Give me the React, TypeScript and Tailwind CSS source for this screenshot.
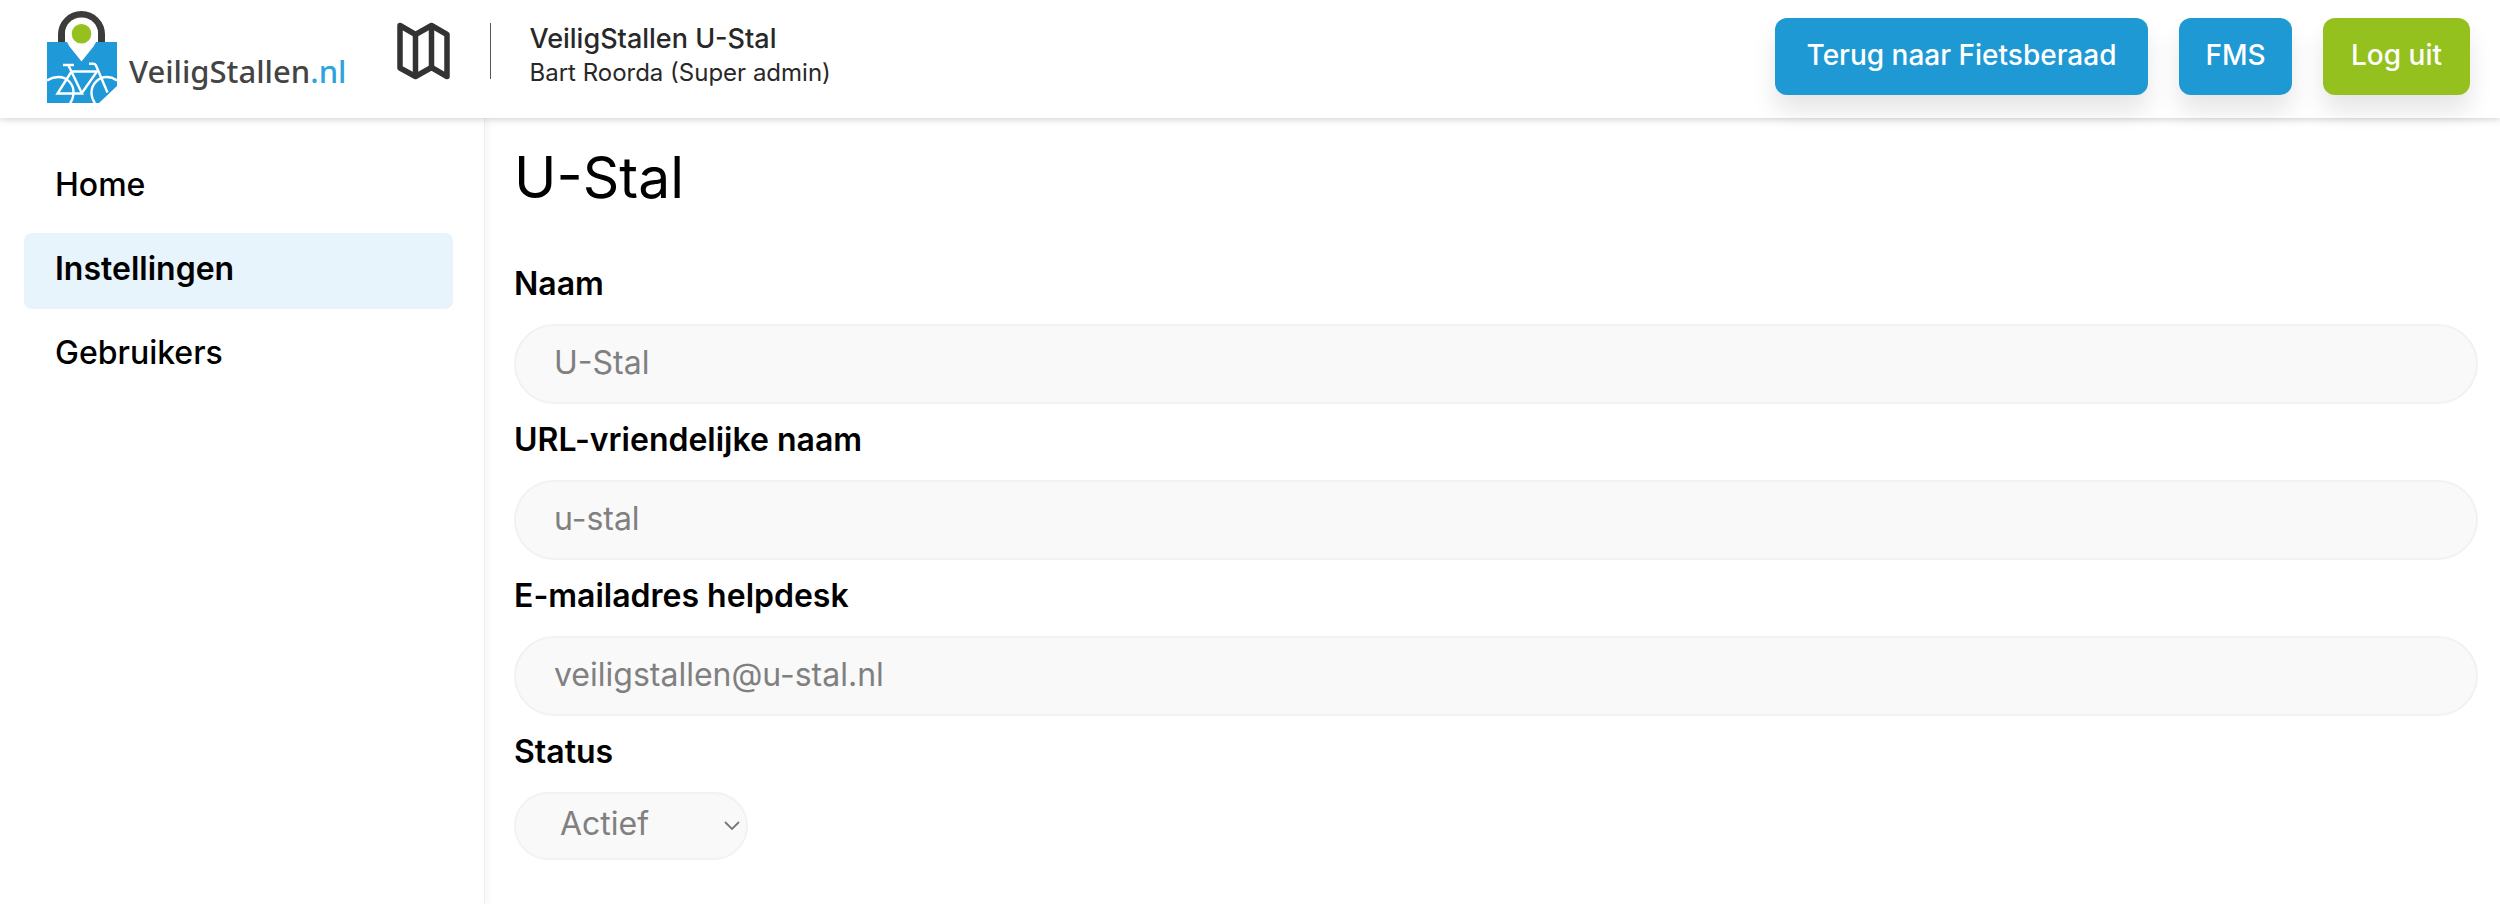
import { useState } from "react";
import clsx from "clsx";

interface FieldProps {
    id: string;
    label: string;
    value: string;
}

const menuItems = ["Home", "Instellingen", "Gebruikers"];

const fields: FieldProps[] = [
    { id: "naam", label: "Naam", value: "U-Stal" },
    { id: "url-naam", label: "URL-vriendelijke naam", value: "u-stal" },
    { id: "helpdesk", label: "E-mailadres helpdesk", value: "veiligstallen@u-stal.nl" },
];

const Logo = () => (
    <a href="#" className="flex items-start text-[#444444]" aria-label="VeiligStallen.nl">
        <svg width="70" height="92" viewBox="0 0 70 92" fill="none">
            {/* lock */}
            <path d="M14.5 34V23.500a20 20 0 0 1 40 0V34" stroke="#3c3c3b" strokeWidth="7" />
            <path d="M0 31H70V75L52 92H0Z" fill="#1f99d8" />
            {/* pin */}
            <path
                d="M34.500 6.500c-9.500 0-16.500 7-16.500 16.200 0 4.800 2 8.800 4.500 12.800L34.500 50.500 46.500 35.500c2.500-4 4.500-8 4.500-12.800 0-9.200-7-16.200-16.500-16.200Z"
                fill="#fff"
            />
            <circle cx="34.500" cy="22.800" r="9.800" fill="#95c11f" />
            {/* bike */}
            <g stroke="#fff" strokeWidth="2.400">
                <path d="M0 69.500c4-2.500 7.500-3.500 11.500-3.500 8.500 0 15 7 15 15 0 4-1 8-3.500 11" />
                <path d="M70 69.500c-3-2.300-6.500-3.500-10-3.500-8.500 0-15.500 7-15.500 15.500 0 4 1.200 7.500 3.500 10.500" />
                <path d="M16 54H27M21.500 54.500 35 82.500H10.500L24.500 60.500M24.500 60.500H50L34.500 82.500" />
                <path d="M42 52.800H46.500C48 52.800 48.600 53.300 49 54.500L60.500 81.500" />
            </g>
        </svg>
        <span className="mt-10 ml-3 font-['Noto_Sans'] text-[31px] leading-10 font-medium">
            VeiligStallen<span className="text-[#2ea3dc]">.nl</span>
        </span>
    </a>
);

const MapIcon = () => (
    <svg width="56" height="58" viewBox="0 0 56 58" fill="none" stroke="#333" strokeWidth="5.500" strokeLinejoin="round">
        <path d="M4 3.500 19.500 12.500 35.500 3.500 51 12.500V54.500L35.500 45.500 19.500 54.500 4 46Z" />
        <path d="M19.500 12.500V54.500M35.500 3.500V45.500" />
    </svg>
);

const Header = () => (
    <header className="relative flex h-[118px] items-start justify-between bg-white pr-[30px] pl-[47px] shadow-[0_0_8px_rgba(0,0,0,0.25)]">
        <div className="flex items-start pt-[11px]">
            <Logo />
            <a href="#" className="mt-[11px] ml-[50px]" aria-label="Kaart">
                <MapIcon />
            </a>
            <div className="mt-3 ml-[38px] h-14 w-px bg-[#555555]" />
            <div className="mt-[10px] ml-[38px] text-[#282828]">
                <div className="text-[27px] leading-9 font-medium">VeiligStallen U-Stal</div>
                <div className="text-[24px] leading-8">Bart Roorda (Super admin)</div>
            </div>
        </div>
        <div className="flex gap-[31px] pt-[18px] text-[28px] font-medium text-white">
            <button className="h-[77px] w-[373px] rounded-xl bg-[#1f99d3] pb-1 shadow-[0_16px_24px_rgba(0,0,0,0.1)]">
                Terug naar Fietsberaad
            </button>
            <button className="h-[77px] w-[113px] rounded-xl bg-[#1f99d3] pb-1 shadow-[0_16px_24px_rgba(0,0,0,0.1)]">
                FMS
            </button>
            <button className="h-[77px] w-[147px] rounded-xl bg-[#95c11f] pb-1 shadow-[0_16px_24px_rgba(0,0,0,0.1)]">
                Log uit
            </button>
        </div>
    </header>
);

const Field = ({ id, label, value }: FieldProps) => (
    <>
        <label htmlFor={id} className="flex h-[76px] items-center pb-1 text-[32px] font-semibold">
            {label}
        </label>
        <input
            id={id}
            type="text"
            readOnly
            defaultValue={value}
            className="h-20 w-full rounded-full border-2 border-[#f2f2f2] bg-[#f9f9f9] px-[38px] pb-1 text-[32px] text-[#808080] outline-none"
        />
    </>
);

const App = () => {
    const [active, setActive] = useState("Instellingen");

    return (
        <div className="flex min-h-screen flex-col bg-white font-['Inter',sans-serif] text-black">
            <Header />
            <div className="flex flex-1">
                <nav className="w-[485px] shrink-0 border-r border-[#f0f0f0] pt-[31px] pr-[31px] pl-6 shadow-[3px_0_6px_rgba(0,0,0,0.04)]">
                    <ul className="flex flex-col gap-2">
                        {menuItems.map((v) => (
                            <li key={v}>
                                <a
                                    href="#"
                                    onClick={() => setActive(v)}
                                    className={clsx(
                                        "flex h-[76px] items-center rounded-lg px-[31px] pb-1 text-[32px]",
                                        v === active ? "bg-[#e7f4fb] font-semibold" : "font-medium",
                                    )}
                                >
                                    {v}
                                </a>
                            </li>
                        ))}
                    </ul>
                </nav>
                <main className="flex-1 pt-6 pr-[22px] pl-[29px]">
                    <h1 className="mb-[34px] text-[57px] leading-[72px]">U-Stal</h1>
                    {fields.map((v) => (
                        <Field key={v.id} {...v} />
                    ))}
                    <label htmlFor="status" className="flex h-[76px] items-center pb-1 text-[32px] font-semibold">
                        Status
                    </label>
                    <div className="relative w-[234px]">
                        <select
                            id="status"
                            className="h-[68px] w-full appearance-none rounded-full border-2 border-[#f2f2f2] bg-[#f9f9f9] pb-1 pl-11 text-[32px] text-[#808080] outline-none"
                        >
                            <option>Actief</option>
                            <option>Inactief</option>
                        </select>
                        <svg
                            className="pointer-events-none absolute top-[29px] right-2"
                            width="16"
                            height="10"
                            viewBox="0 0 16 10"
                            fill="none"
                            stroke="#777"
                            strokeWidth="1.800"
                        >
                            <path d="M1 1 8 8 15 1" />
                        </svg>
                    </div>
                </main>
            </div>
        </div>
    );
};

export default App;
